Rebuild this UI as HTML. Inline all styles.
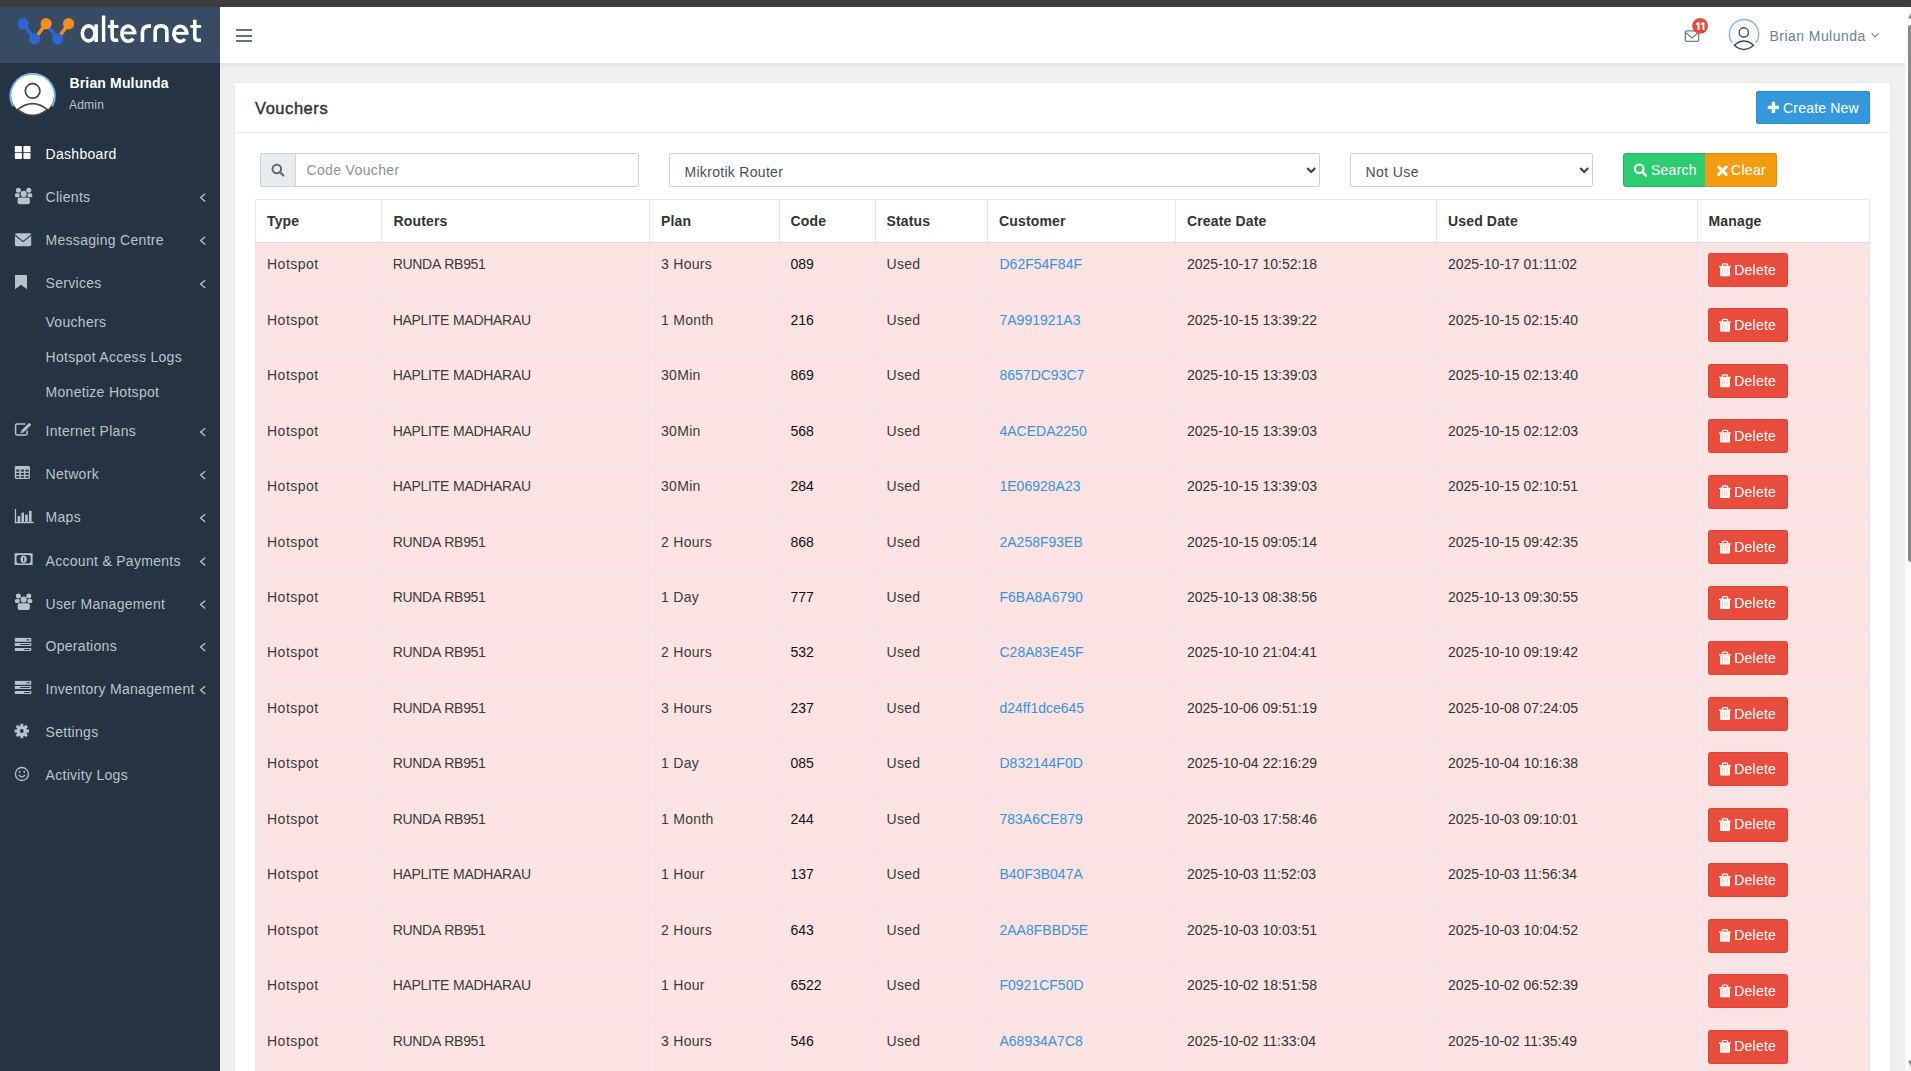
<!DOCTYPE html>
<html><head><meta charset="utf-8"><style>
*{box-sizing:border-box;margin:0;padding:0}
html,body{width:1911px;height:1071px;overflow:hidden;background:#f0f0f0;font-family:"Liberation Sans",sans-serif;font-size:14px;color:#333}
.abs{position:absolute}
.t{position:absolute;white-space:nowrap;line-height:1}
svg{position:absolute;overflow:visible}
</style></head><body>
<div class="abs" style="left:0px;top:0px;width:1911px;height:7px;background:#3d3d3d;"></div>
<div class="abs" style="left:0px;top:7px;width:220px;height:1064px;background:#253342;"></div>
<div class="abs" style="left:0px;top:7px;width:220px;height:56px;background:#374c63;"></div>
<div class="abs" style="left:220px;top:7px;width:1685px;height:56px;background:#fff;"></div>
<div class="abs" style="left:220px;top:63px;width:1685px;height:5px;background:linear-gradient(#e1e1e1,#f0f0f0);"></div>
<div class="abs" style="left:1905px;top:7px;width:6px;height:1064px;background:#fbfbfb;"></div>
<div class="abs" style="left:1908px;top:25px;width:3px;height:537px;background:#888;border-radius:3px 0 0 3px"></div>
<svg style="left:0;top:0" width="1911" height="1071"><path d="M1908,18.6 L1911,13 L1911,18.6 Z" fill="#888"/><path d="M1908,1060.8 L1911,1060.8 L1911,1066.8 Z" fill="#888"/></svg>
<div class="abs" style="left:235px;top:83px;width:1655px;height:1000px;background:#fff;box-shadow:0 0 1px rgba(0,0,0,.15)"></div>
<div class="abs" style="left:235px;top:132px;width:1655px;height:1px;background:#ececec;"></div>
<svg style="left:0;top:0" width="220" height="63">
<g stroke-width="3.5" stroke-linecap="round">
<line x1="23.1" y1="23.7" x2="34.6" y2="38.9" stroke="#2f66d3"/>
<line x1="34.6" y1="38.9" x2="46.1" y2="23.7" stroke="#f68d20"/>
<line x1="46.1" y1="23.7" x2="57.6" y2="38.9" stroke="#2f66d3"/>
<line x1="57.6" y1="38.9" x2="68.6" y2="23.7" stroke="#f68d20"/>
</g>
<circle cx="23.1" cy="23.7" r="5.6" fill="#2f66d3"/>
<circle cx="34.6" cy="38.9" r="5.6" fill="#2f66d3"/>
<circle cx="46.1" cy="23.7" r="5.6" fill="#f68d20"/>
<circle cx="57.6" cy="38.9" r="5.6" fill="#2f66d3"/>
<circle cx="68.6" cy="23.7" r="5.6" fill="#f68d20"/>
</svg>
<svg style="left:0;top:0" width="220" height="63"><g fill="none" stroke="#fff" stroke-width="3.6">
<ellipse cx="88.6" cy="33.35" rx="6.3" ry="7.5"/>
<path d="M112.15,19.9 V36.6 Q112.15,40.3 115.6,40.3 H118.2"/>
<path d="M134.6,33 A6.4,7.5 0 1 0 133.2,38.4"/>
<path d="M142.45,41.9 V32 C142.45,27.6 145.8,25.9 151,25.9"/>
<path d="M155.15,41.9 V31.3 Q155.15,25.9 161,25.9 Q166.85,25.9 166.85,31.3 V41.9"/>
<path d="M186.7,33.2 A6.45,7.6 0 1 0 185.0,39.0"/>
<path d="M194.75,19.8 V36.6 Q194.75,40.3 198.2,40.3 H201"/>
</g><g fill="#fff">
<rect x="94.4" y="24.3" width="3.5" height="17.7"/>
<rect x="101.9" y="15.5" width="3.4" height="26.4"/>
<rect x="107.8" y="24.9" width="10.7" height="3.1"/>
<rect x="121.8" y="31.6" width="14.6" height="2.8"/>
<rect x="174" y="31.9" width="14.5" height="2.9"/>
<rect x="190.3" y="25" width="10.9" height="2.9"/>
</g></svg>
<svg style="left:0;top:63px" width="70" height="70" viewBox="0 63 70 70">
<circle cx="32.6" cy="94.6" r="21.6" fill="#fff"/>
<path d="M9,106.5 L17.6,109.8 Q32.5,121 47.4,109.8 L56,106.5 L56,122 L9,122 Z" fill="#253342"/>
<path d="M17.6,109.6 Q32.5,97.5 47.4,109.6 Q32.5,121 17.6,109.6 Z" fill="#fff" stroke="#3f4852" stroke-width="1.7"/>
<circle cx="32.6" cy="90.9" r="7.3" fill="none" stroke="#3f4852" stroke-width="1.7"/>
<path d="M13.0,106.4 A22.2,22.2 0 1 1 52.2,106.4" fill="none" stroke="#6cb6f5" stroke-width="1.8"/>
</svg>
<div class="t" style="left:69.50px;top:75.95px;font-size:14px;color:#fff;font-weight:bold;letter-spacing:0.15px">Brian Mulunda</div>
<div class="t" style="left:69.00px;top:98.84px;font-size:12px;color:#b8c7ce;font-weight:normal;letter-spacing:0.2px">Admin</div>
<div class="t" style="left:45.50px;top:146.75px;font-size:14px;color:#fff;font-weight:normal;letter-spacing:0.3px">Dashboard</div>
<div class="t" style="left:45.50px;top:189.65px;font-size:14px;color:#b8c7ce;font-weight:normal;letter-spacing:0.3px">Clients</div>
<svg style="left:0;top:0" width="220" height="1071"><path d="M205.2,193.80 L200.6,197.60 L205.2,201.40" fill="none" stroke="#b8c7ce" stroke-width="1.3"/></svg>
<div class="t" style="left:45.50px;top:232.65px;font-size:14px;color:#b8c7ce;font-weight:normal;letter-spacing:0.3px">Messaging Centre</div>
<svg style="left:0;top:0" width="220" height="1071"><path d="M205.2,236.80 L200.6,240.60 L205.2,244.40" fill="none" stroke="#b8c7ce" stroke-width="1.3"/></svg>
<div class="t" style="left:45.50px;top:276.15px;font-size:14px;color:#b8c7ce;font-weight:normal;letter-spacing:0.3px">Services</div>
<svg style="left:0;top:0" width="220" height="1071"><path d="M205.2,280.30 L200.6,284.10 L205.2,287.90" fill="none" stroke="#b8c7ce" stroke-width="1.3"/></svg>
<div class="t" style="left:45.50px;top:315.15px;font-size:14px;color:#b8c7ce;font-weight:normal;letter-spacing:0.3px">Vouchers</div>
<div class="t" style="left:45.50px;top:350.15px;font-size:14px;color:#b8c7ce;font-weight:normal;letter-spacing:0.3px">Hotspot Access Logs</div>
<div class="t" style="left:45.50px;top:385.15px;font-size:14px;color:#b8c7ce;font-weight:normal;letter-spacing:0.3px">Monetize Hotspot</div>
<div class="t" style="left:45.50px;top:424.15px;font-size:14px;color:#b8c7ce;font-weight:normal;letter-spacing:0.3px">Internet Plans</div>
<svg style="left:0;top:0" width="220" height="1071"><path d="M205.2,428.30 L200.6,432.10 L205.2,435.90" fill="none" stroke="#b8c7ce" stroke-width="1.3"/></svg>
<div class="t" style="left:45.50px;top:467.15px;font-size:14px;color:#b8c7ce;font-weight:normal;letter-spacing:0.3px">Network</div>
<svg style="left:0;top:0" width="220" height="1071"><path d="M205.2,471.30 L200.6,475.10 L205.2,478.90" fill="none" stroke="#b8c7ce" stroke-width="1.3"/></svg>
<div class="t" style="left:45.50px;top:510.15px;font-size:14px;color:#b8c7ce;font-weight:normal;letter-spacing:0.3px">Maps</div>
<svg style="left:0;top:0" width="220" height="1071"><path d="M205.2,514.30 L200.6,518.10 L205.2,521.90" fill="none" stroke="#b8c7ce" stroke-width="1.3"/></svg>
<div class="t" style="left:45.50px;top:553.65px;font-size:14px;color:#b8c7ce;font-weight:normal;letter-spacing:0.3px">Account &amp; Payments</div>
<svg style="left:0;top:0" width="220" height="1071"><path d="M205.2,557.80 L200.6,561.60 L205.2,565.40" fill="none" stroke="#b8c7ce" stroke-width="1.3"/></svg>
<div class="t" style="left:45.50px;top:596.65px;font-size:14px;color:#b8c7ce;font-weight:normal;letter-spacing:0.3px">User Management</div>
<svg style="left:0;top:0" width="220" height="1071"><path d="M205.2,600.80 L200.6,604.60 L205.2,608.40" fill="none" stroke="#b8c7ce" stroke-width="1.3"/></svg>
<div class="t" style="left:45.50px;top:639.15px;font-size:14px;color:#b8c7ce;font-weight:normal;letter-spacing:0.3px">Operations</div>
<svg style="left:0;top:0" width="220" height="1071"><path d="M205.2,643.30 L200.6,647.10 L205.2,650.90" fill="none" stroke="#b8c7ce" stroke-width="1.3"/></svg>
<div class="t" style="left:45.50px;top:682.15px;font-size:14px;color:#b8c7ce;font-weight:normal;letter-spacing:0.3px">Inventory Management</div>
<svg style="left:0;top:0" width="220" height="1071"><path d="M205.2,686.30 L200.6,690.10 L205.2,693.90" fill="none" stroke="#b8c7ce" stroke-width="1.3"/></svg>
<div class="t" style="left:45.50px;top:725.15px;font-size:14px;color:#b8c7ce;font-weight:normal;letter-spacing:0.3px">Settings</div>
<div class="t" style="left:45.50px;top:768.15px;font-size:14px;color:#b8c7ce;font-weight:normal;letter-spacing:0.3px">Activity Logs</div>
<svg style="left:0;top:0" width="220" height="1071">
<g fill="#fff"><rect x="14.8" y="146" width="7.1" height="6.1" rx="0.6"/><rect x="23.4" y="146" width="7.1" height="6.1" rx="0.6"/>
<rect x="14.8" y="152.8" width="7.1" height="6.1" rx="0.6"/><rect x="23.4" y="152.8" width="7.1" height="6.1" rx="0.6"/></g>
<g fill="#b8c2cf" transform="translate(0,0)">
<circle cx="18.4" cy="190.3" r="2.5"/><circle cx="28.8" cy="190.3" r="2.5"/>
<circle cx="23.7" cy="193.9" r="3.1"/>
<rect x="14.9" y="193.2" width="4.8" height="4" rx="1.5"/>
<rect x="27.5" y="193.2" width="4.8" height="4" rx="1.5"/>
<rect x="17.6" y="197.5" width="12.3" height="6.7" rx="2"/>
</g>
<rect x="14.9" y="233.2" width="16.3" height="13" rx="1.6" fill="#b8c2cf"/>
<path d="M15.2,235.3 L23,241.6 L30.9,235.3" fill="none" stroke="#253342" stroke-width="1.1"/>
<path d="M15,275 H27 V289.2 L21,284.8 L15,289.2 Z" fill="#b8c2cf"/>
<path d="M25.5,424.1 H17 Q15.6,424.1 15.6,425.5 V433.6 Q15.6,435 17,435 H25.8 Q27.2,435 27.2,433.6 V430.5" fill="none" stroke="#b8c2cf" stroke-width="1.5"/>
<path d="M29.3,422.8 L31.2,424.7 L23.4,432.5 L20.6,433.3 L21.4,430.6 Z" fill="#b8c2cf"/>
<path d="M22.2,431 L22.8,431.6" stroke="#253342" stroke-width="0.8"/>
<rect x="14.8" y="466" width="15.1" height="13" rx="1.4" fill="#b8c2cf"/>
<g fill="#253342">
<rect x="16.2" y="469.6" width="3.2" height="2"/><rect x="20.9" y="469.6" width="3.2" height="2"/><rect x="25.5" y="469.6" width="3.2" height="2"/>
<rect x="16.2" y="472.9" width="3.2" height="2"/><rect x="20.9" y="472.9" width="3.2" height="2"/><rect x="25.5" y="472.9" width="3.2" height="2"/>
<rect x="16.2" y="476.1" width="3.2" height="1.7"/><rect x="20.9" y="476.1" width="3.2" height="1.7"/><rect x="25.5" y="476.1" width="3.2" height="1.7"/>
</g>
<g fill="#b8c2cf">
<rect x="14.8" y="509" width="1.3" height="14.2"/><rect x="14.8" y="521.9" width="18.9" height="1.3"/>
<rect x="17.6" y="516" width="2.6" height="5.9"/><rect x="21.4" y="512.6" width="2.6" height="9.3"/>
<rect x="25.2" y="514.6" width="2.6" height="7.3"/><rect x="29" y="510.8" width="2.6" height="11.1"/>
</g>
<rect x="14.6" y="553.2" width="18" height="11.8" fill="#b8c2cf"/>
<path d="M18,555 H29.2 L30.7,556.6 V562 L29.2,563.6 H18 L16.5,562 V556.6 Z" fill="#253342"/>
<ellipse cx="23.6" cy="559.3" rx="3.1" ry="3.8" fill="#b8c2cf"/>
<rect x="23.1" y="557.3" width="1.1" height="4.2" fill="#253342"/>
<g fill="#b8c2cf" transform="translate(0,405.7)">
<circle cx="18.4" cy="190.3" r="2.5"/><circle cx="28.8" cy="190.3" r="2.5"/>
<circle cx="23.7" cy="193.9" r="3.1"/>
<rect x="14.9" y="193.2" width="4.8" height="4" rx="1.5"/>
<rect x="27.5" y="193.2" width="4.8" height="4" rx="1.5"/>
<rect x="17.6" y="197.5" width="12.3" height="6.7" rx="2"/>
</g>
<g><rect x="14.8" y="637.90" width="16.45" height="3.9" fill="#b8c2cf"/><rect x="26.4" y="639.35" width="3.50" height="1" fill="#253342"/><rect x="14.8" y="643.00" width="16.45" height="3.0" fill="#b8c2cf"/><rect x="20.2" y="644.00" width="9.70" height="1" fill="#253342"/><rect x="14.8" y="648.00" width="16.45" height="3.0" fill="#b8c2cf"/><rect x="24.1" y="649.00" width="5.80" height="1" fill="#253342"/></g>
<g><rect x="14.8" y="680.90" width="16.45" height="3.9" fill="#b8c2cf"/><rect x="26.4" y="682.35" width="3.50" height="1" fill="#253342"/><rect x="14.8" y="686.00" width="16.45" height="3.0" fill="#b8c2cf"/><rect x="20.2" y="687.00" width="9.70" height="1" fill="#253342"/><rect x="14.8" y="691.00" width="16.45" height="3.0" fill="#b8c2cf"/><rect x="24.1" y="692.00" width="5.80" height="1" fill="#253342"/></g>
<g transform="translate(21.8,731)" fill="#b8c2cf">
<circle r="5.2"/>
<g><rect x="-1.5" y="-7.2" width="3" height="3" transform="rotate(0)"/><rect x="-1.5" y="-7.2" width="3" height="3" transform="rotate(45)"/><rect x="-1.5" y="-7.2" width="3" height="3" transform="rotate(90)"/><rect x="-1.5" y="-7.2" width="3" height="3" transform="rotate(135)"/><rect x="-1.5" y="-7.2" width="3" height="3" transform="rotate(180)"/><rect x="-1.5" y="-7.2" width="3" height="3" transform="rotate(225)"/><rect x="-1.5" y="-7.2" width="3" height="3" transform="rotate(270)"/><rect x="-1.5" y="-7.2" width="3" height="3" transform="rotate(315)"/></g>
<circle r="1.9" fill="#253342"/>
</g>
<circle cx="21.9" cy="774" r="6.5" fill="none" stroke="#b8c2cf" stroke-width="1.3"/>
<circle cx="19.6" cy="771.7" r="0.95" fill="#b8c2cf"/><circle cx="24.2" cy="771.7" r="0.95" fill="#b8c2cf"/>
<path d="M18.8,775 Q21.9,778.6 25,775" fill="none" stroke="#b8c2cf" stroke-width="1.2"/>
</svg>
<div class="abs" style="left:236px;top:29px;width:16.2px;height:2px;background:#637480;"></div>
<div class="abs" style="left:236px;top:34.8px;width:16.2px;height:2px;background:#637480;"></div>
<div class="abs" style="left:236px;top:40px;width:16.2px;height:2px;background:#637480;"></div>
<svg style="left:0;top:0" width="1911" height="70">
<rect x="1685.3" y="30.9" width="13.4" height="10.4" rx="1.3" fill="none" stroke="#6e7e8a" stroke-width="1.3"/>
<path d="M1685.6,32.6 L1692,38 L1698.5,32.6" fill="none" stroke="#6e7e8a" stroke-width="1.3"/>
<circle cx="1700.1" cy="25.9" r="7.9" fill="#e74c3c"/>
<path d="M1732.3,42.9 A14.65,14.65 0 1 1 1755.8,42.9" fill="none" stroke="#74b9f7" stroke-width="1.4"/>
<circle cx="1743.8" cy="32.4" r="4.6" fill="none" stroke="#3f4852" stroke-width="1.4"/>
<path d="M1734.3,45.2 Q1743.9,36.8 1753.5,45.2 Q1743.9,53.6 1734.3,45.2 Z" fill="none" stroke="#3f4852" stroke-width="1.4"/>
<path d="M1871.6,33.3 L1875,36.9 L1878.5,33.3" fill="none" stroke="#72808c" stroke-width="1.15"/>
</svg>
<svg style="left:0;top:0" width="1911" height="70"><path d="M1697.6,22.3 h1.9 v7.7 h-1.9 v-5.6 l-1.6,0.9 v-1.8 z M1702.5,22.3 h1.9 v7.7 h-1.9 v-5.6 l-1.6,0.9 v-1.8 z" fill="#fff"/></svg>
<div class="t" style="left:1769.50px;top:29.15px;font-size:14px;color:#72808c;font-weight:normal;letter-spacing:0.45px">Brian Mulunda</div>
<div class="t" style="left:255.00px;top:100.33px;font-size:16.5px;color:#333;font-weight:normal;letter-spacing:0.55px;-webkit-text-stroke:0.45px #333">Vouchers</div>
<div class="abs" style="left:1756px;top:91px;width:114px;height:33px;background:#3498db;border:1px solid #2a8ad0;border-radius:2px"></div>
<svg style="left:0;top:0" width="1911" height="200">
<path d="M1767.8,107.4 H1779 M1773.4,101.8 V113" stroke="#fff" stroke-width="3.4"/>
</svg>
<div class="t" style="left:1783.00px;top:101.25px;font-size:14px;color:#fff;font-weight:normal;letter-spacing:0.2px">Create New</div>
<div class="abs" style="left:260px;top:153px;width:36px;height:34px;background:#e9ecef;border:1px solid #cdd0d4;border-radius:2px 0 0 2px"></div>
<div class="abs" style="left:295px;top:153px;width:344px;height:34px;background:#fff;border:1px solid #d2d2d2;border-radius:0 2px 2px 0"></div>
<svg style="left:0;top:0" width="1911" height="200">
<circle cx="276.8" cy="169" r="4.3" fill="none" stroke="#5a6a78" stroke-width="2"/>
<path d="M279.8,172 L283.3,175.5" stroke="#5a6a78" stroke-width="2.2" stroke-linecap="round"/>
</svg>
<div class="t" style="left:306.50px;top:163.15px;font-size:14px;color:#8c939b;font-weight:normal;letter-spacing:0.35px">Code Voucher</div>
<div class="abs" style="left:669px;top:153px;width:651px;height:34px;background:#fff;border:1px solid #d2d2d2;border-radius:2px"></div>
<div class="t" style="left:684.50px;top:164.75px;font-size:14px;color:#495057;font-weight:normal;letter-spacing:0.3px">Mikrotik Router</div>
<div class="abs" style="left:1350px;top:153px;width:243px;height:34px;background:#fff;border:1px solid #d2d2d2;border-radius:2px"></div>
<div class="t" style="left:1365.50px;top:164.75px;font-size:14px;color:#495057;font-weight:normal;letter-spacing:0.4px">Not Use</div>
<svg style="left:0;top:0" width="1911" height="200">
<path d="M1307.2,168 L1311.2,172 L1315.2,168" fill="none" stroke="#3d434a" stroke-width="2.1"/>
<path d="M1580.2,168 L1584.2,172 L1588.2,168" fill="none" stroke="#3d434a" stroke-width="2.1"/>
</svg>
<div class="abs" style="left:1623px;top:153px;width:83px;height:34px;background:#2ecc71;border:1px solid #22b561;border-radius:3px 0 0 3px"></div>
<div class="abs" style="left:1705px;top:153px;width:72px;height:34px;background:#f39c12;border:1px solid #dd8b0b;border-left:0;border-radius:0 3px 3px 0"></div>
<svg style="left:0;top:0" width="1911" height="200">
<circle cx="1639.2" cy="168.8" r="4.3" fill="none" stroke="#fff" stroke-width="2.1"/>
<path d="M1642.3,171.9 L1646,175.6" stroke="#fff" stroke-width="2.4" stroke-linecap="round"/>
<path d="M1718.8,167 L1726.2,174.4 M1726.2,167 L1718.8,174.4" stroke="#fff" stroke-width="3" stroke-linecap="round"/>
</svg>
<div class="t" style="left:1651.00px;top:163.15px;font-size:14px;color:#fff;font-weight:normal;letter-spacing:0.25px">Search</div>
<div class="t" style="left:1731.00px;top:163.15px;font-size:14px;color:#fff;font-weight:normal;letter-spacing:0.3px">Clear</div>
<div class="abs" style="left:255px;top:243px;width:1615px;height:900px;background:#fbe3e3;"></div>
<div class="abs" style="left:255px;top:199px;width:1615px;height:1px;background:#e6e9ec;"></div>
<div class="abs" style="left:255px;top:242px;width:1615px;height:1px;background:#dcdcdc;"></div>
<div class="abs" style="left:256px;top:297.40px;width:1613px;height:1px;background:#e7e5e7"></div>
<div class="abs" style="left:256px;top:352.87px;width:1613px;height:1px;background:#e7e5e7"></div>
<div class="abs" style="left:256px;top:408.34px;width:1613px;height:1px;background:#e7e5e7"></div>
<div class="abs" style="left:256px;top:463.81px;width:1613px;height:1px;background:#e7e5e7"></div>
<div class="abs" style="left:256px;top:519.28px;width:1613px;height:1px;background:#e7e5e7"></div>
<div class="abs" style="left:256px;top:574.75px;width:1613px;height:1px;background:#e7e5e7"></div>
<div class="abs" style="left:256px;top:630.22px;width:1613px;height:1px;background:#e7e5e7"></div>
<div class="abs" style="left:256px;top:685.69px;width:1613px;height:1px;background:#e7e5e7"></div>
<div class="abs" style="left:256px;top:741.16px;width:1613px;height:1px;background:#e7e5e7"></div>
<div class="abs" style="left:256px;top:796.63px;width:1613px;height:1px;background:#e7e5e7"></div>
<div class="abs" style="left:256px;top:852.10px;width:1613px;height:1px;background:#e7e5e7"></div>
<div class="abs" style="left:256px;top:907.57px;width:1613px;height:1px;background:#e7e5e7"></div>
<div class="abs" style="left:256px;top:963.04px;width:1613px;height:1px;background:#e7e5e7"></div>
<div class="abs" style="left:256px;top:1018.51px;width:1613px;height:1px;background:#e7e5e7"></div>
<div class="abs" style="left:256px;top:1073.98px;width:1613px;height:1px;background:#e7e5e7"></div>
<div class="abs" style="left:255px;top:199px;width:1px;height:43px;background:#e6e9ec;"></div>
<div class="abs" style="left:255px;top:243px;width:1px;height:900px;background:#e9e4e8;"></div>
<div class="abs" style="left:381px;top:199px;width:1px;height:43px;background:#e6e9ec;"></div>
<div class="abs" style="left:381px;top:243px;width:1px;height:900px;background:#e9e4e8;"></div>
<div class="abs" style="left:649px;top:199px;width:1px;height:43px;background:#e6e9ec;"></div>
<div class="abs" style="left:649px;top:243px;width:1px;height:900px;background:#e9e4e8;"></div>
<div class="abs" style="left:779px;top:199px;width:1px;height:43px;background:#e6e9ec;"></div>
<div class="abs" style="left:779px;top:243px;width:1px;height:900px;background:#e9e4e8;"></div>
<div class="abs" style="left:875px;top:199px;width:1px;height:43px;background:#e6e9ec;"></div>
<div class="abs" style="left:875px;top:243px;width:1px;height:900px;background:#e9e4e8;"></div>
<div class="abs" style="left:987px;top:199px;width:1px;height:43px;background:#e6e9ec;"></div>
<div class="abs" style="left:987px;top:243px;width:1px;height:900px;background:#e9e4e8;"></div>
<div class="abs" style="left:1175px;top:199px;width:1px;height:43px;background:#e6e9ec;"></div>
<div class="abs" style="left:1175px;top:243px;width:1px;height:900px;background:#e9e4e8;"></div>
<div class="abs" style="left:1436px;top:199px;width:1px;height:43px;background:#e6e9ec;"></div>
<div class="abs" style="left:1436px;top:243px;width:1px;height:900px;background:#e9e4e8;"></div>
<div class="abs" style="left:1697px;top:199px;width:1px;height:43px;background:#e6e9ec;"></div>
<div class="abs" style="left:1697px;top:243px;width:1px;height:900px;background:#e9e4e8;"></div>
<div class="abs" style="left:1869px;top:199px;width:1px;height:43px;background:#e6e9ec;"></div>
<div class="abs" style="left:1869px;top:243px;width:1px;height:900px;background:#e9e4e8;"></div>
<div class="t" style="left:267.00px;top:214.15px;font-size:14px;color:#333;font-weight:bold;letter-spacing:0.15px">Type</div>
<div class="t" style="left:393.50px;top:214.15px;font-size:14px;color:#333;font-weight:bold;letter-spacing:0.15px">Routers</div>
<div class="t" style="left:661.00px;top:214.15px;font-size:14px;color:#333;font-weight:bold;letter-spacing:0.15px">Plan</div>
<div class="t" style="left:790.50px;top:214.15px;font-size:14px;color:#333;font-weight:bold;letter-spacing:0.15px">Code</div>
<div class="t" style="left:886.50px;top:214.15px;font-size:14px;color:#333;font-weight:bold;letter-spacing:0.15px">Status</div>
<div class="t" style="left:999.00px;top:214.15px;font-size:14px;color:#333;font-weight:bold;letter-spacing:0.15px">Customer</div>
<div class="t" style="left:1187.00px;top:214.15px;font-size:14px;color:#333;font-weight:bold;letter-spacing:0.15px">Create Date</div>
<div class="t" style="left:1448.00px;top:214.15px;font-size:14px;color:#333;font-weight:bold;letter-spacing:0.15px">Used Date</div>
<div class="t" style="left:1708.50px;top:214.15px;font-size:14px;color:#333;font-weight:bold;letter-spacing:0.15px">Manage</div>
<div class="t" style="left:267.00px;top:257.15px;font-size:14px;color:#3a3a3a;font-weight:normal;letter-spacing:0.5px">Hotspot</div>
<div class="t" style="left:392.70px;top:257.15px;font-size:14px;color:#3a3a3a;font-weight:normal;letter-spacing:-0.3px;word-spacing:0.5px">RUNDA RB951</div>
<div class="t" style="left:661.00px;top:257.15px;font-size:14px;color:#3a3a3a;font-weight:normal;letter-spacing:0.3px">3 Hours</div>
<div class="t" style="left:790.50px;top:257.15px;font-size:14px;color:#111;font-weight:normal;">089</div>
<div class="t" style="left:886.50px;top:257.15px;font-size:14px;color:#3a3a3a;font-weight:normal;letter-spacing:0.3px">Used</div>
<div class="t" style="left:999.50px;top:257.15px;font-size:14px;color:#3592dc;font-weight:normal;">D62F54F84F</div>
<div class="t" style="left:1187.00px;top:257.15px;font-size:14px;color:#333;font-weight:normal;">2025-10-17 10:52:18</div>
<div class="t" style="left:1448.00px;top:257.15px;font-size:14px;color:#333;font-weight:normal;">2025-10-17 01:11:02</div>
<div class="abs" style="left:1708px;top:253.00px;width:80px;height:34px;background:#e74c3c;border:1px solid #dc4334;border-radius:2.5px"></div>
<div class="t" style="left:1734.30px;top:262.75px;font-size:14px;color:#fff;font-weight:normal;letter-spacing:0.2px">Delete</div>
<div class="t" style="left:267.00px;top:312.62px;font-size:14px;color:#3a3a3a;font-weight:normal;letter-spacing:0.5px">Hotspot</div>
<div class="t" style="left:392.70px;top:312.62px;font-size:14px;color:#3a3a3a;font-weight:normal;letter-spacing:-0.3px;word-spacing:0.5px">HAPLITE MADHARAU</div>
<div class="t" style="left:661.00px;top:312.62px;font-size:14px;color:#3a3a3a;font-weight:normal;letter-spacing:0.3px">1 Month</div>
<div class="t" style="left:790.50px;top:312.62px;font-size:14px;color:#111;font-weight:normal;">216</div>
<div class="t" style="left:886.50px;top:312.62px;font-size:14px;color:#3a3a3a;font-weight:normal;letter-spacing:0.3px">Used</div>
<div class="t" style="left:999.50px;top:312.62px;font-size:14px;color:#3592dc;font-weight:normal;">7A991921A3</div>
<div class="t" style="left:1187.00px;top:312.62px;font-size:14px;color:#333;font-weight:normal;">2025-10-15 13:39:22</div>
<div class="t" style="left:1448.00px;top:312.62px;font-size:14px;color:#333;font-weight:normal;">2025-10-15 02:15:40</div>
<div class="abs" style="left:1708px;top:308.47px;width:80px;height:34px;background:#e74c3c;border:1px solid #dc4334;border-radius:2.5px"></div>
<div class="t" style="left:1734.30px;top:318.22px;font-size:14px;color:#fff;font-weight:normal;letter-spacing:0.2px">Delete</div>
<div class="t" style="left:267.00px;top:368.09px;font-size:14px;color:#3a3a3a;font-weight:normal;letter-spacing:0.5px">Hotspot</div>
<div class="t" style="left:392.70px;top:368.09px;font-size:14px;color:#3a3a3a;font-weight:normal;letter-spacing:-0.3px;word-spacing:0.5px">HAPLITE MADHARAU</div>
<div class="t" style="left:661.00px;top:368.09px;font-size:14px;color:#3a3a3a;font-weight:normal;letter-spacing:0.3px">30Min</div>
<div class="t" style="left:790.50px;top:368.09px;font-size:14px;color:#111;font-weight:normal;">869</div>
<div class="t" style="left:886.50px;top:368.09px;font-size:14px;color:#3a3a3a;font-weight:normal;letter-spacing:0.3px">Used</div>
<div class="t" style="left:999.50px;top:368.09px;font-size:14px;color:#3592dc;font-weight:normal;">8657DC93C7</div>
<div class="t" style="left:1187.00px;top:368.09px;font-size:14px;color:#333;font-weight:normal;">2025-10-15 13:39:03</div>
<div class="t" style="left:1448.00px;top:368.09px;font-size:14px;color:#333;font-weight:normal;">2025-10-15 02:13:40</div>
<div class="abs" style="left:1708px;top:363.94px;width:80px;height:34px;background:#e74c3c;border:1px solid #dc4334;border-radius:2.5px"></div>
<div class="t" style="left:1734.30px;top:373.69px;font-size:14px;color:#fff;font-weight:normal;letter-spacing:0.2px">Delete</div>
<div class="t" style="left:267.00px;top:423.56px;font-size:14px;color:#3a3a3a;font-weight:normal;letter-spacing:0.5px">Hotspot</div>
<div class="t" style="left:392.70px;top:423.56px;font-size:14px;color:#3a3a3a;font-weight:normal;letter-spacing:-0.3px;word-spacing:0.5px">HAPLITE MADHARAU</div>
<div class="t" style="left:661.00px;top:423.56px;font-size:14px;color:#3a3a3a;font-weight:normal;letter-spacing:0.3px">30Min</div>
<div class="t" style="left:790.50px;top:423.56px;font-size:14px;color:#111;font-weight:normal;">568</div>
<div class="t" style="left:886.50px;top:423.56px;font-size:14px;color:#3a3a3a;font-weight:normal;letter-spacing:0.3px">Used</div>
<div class="t" style="left:999.50px;top:423.56px;font-size:14px;color:#3592dc;font-weight:normal;">4ACEDA2250</div>
<div class="t" style="left:1187.00px;top:423.56px;font-size:14px;color:#333;font-weight:normal;">2025-10-15 13:39:03</div>
<div class="t" style="left:1448.00px;top:423.56px;font-size:14px;color:#333;font-weight:normal;">2025-10-15 02:12:03</div>
<div class="abs" style="left:1708px;top:419.41px;width:80px;height:34px;background:#e74c3c;border:1px solid #dc4334;border-radius:2.5px"></div>
<div class="t" style="left:1734.30px;top:429.16px;font-size:14px;color:#fff;font-weight:normal;letter-spacing:0.2px">Delete</div>
<div class="t" style="left:267.00px;top:479.03px;font-size:14px;color:#3a3a3a;font-weight:normal;letter-spacing:0.5px">Hotspot</div>
<div class="t" style="left:392.70px;top:479.03px;font-size:14px;color:#3a3a3a;font-weight:normal;letter-spacing:-0.3px;word-spacing:0.5px">HAPLITE MADHARAU</div>
<div class="t" style="left:661.00px;top:479.03px;font-size:14px;color:#3a3a3a;font-weight:normal;letter-spacing:0.3px">30Min</div>
<div class="t" style="left:790.50px;top:479.03px;font-size:14px;color:#111;font-weight:normal;">284</div>
<div class="t" style="left:886.50px;top:479.03px;font-size:14px;color:#3a3a3a;font-weight:normal;letter-spacing:0.3px">Used</div>
<div class="t" style="left:999.50px;top:479.03px;font-size:14px;color:#3592dc;font-weight:normal;">1E06928A23</div>
<div class="t" style="left:1187.00px;top:479.03px;font-size:14px;color:#333;font-weight:normal;">2025-10-15 13:39:03</div>
<div class="t" style="left:1448.00px;top:479.03px;font-size:14px;color:#333;font-weight:normal;">2025-10-15 02:10:51</div>
<div class="abs" style="left:1708px;top:474.88px;width:80px;height:34px;background:#e74c3c;border:1px solid #dc4334;border-radius:2.5px"></div>
<div class="t" style="left:1734.30px;top:484.63px;font-size:14px;color:#fff;font-weight:normal;letter-spacing:0.2px">Delete</div>
<div class="t" style="left:267.00px;top:534.50px;font-size:14px;color:#3a3a3a;font-weight:normal;letter-spacing:0.5px">Hotspot</div>
<div class="t" style="left:392.70px;top:534.50px;font-size:14px;color:#3a3a3a;font-weight:normal;letter-spacing:-0.3px;word-spacing:0.5px">RUNDA RB951</div>
<div class="t" style="left:661.00px;top:534.50px;font-size:14px;color:#3a3a3a;font-weight:normal;letter-spacing:0.3px">2 Hours</div>
<div class="t" style="left:790.50px;top:534.50px;font-size:14px;color:#111;font-weight:normal;">868</div>
<div class="t" style="left:886.50px;top:534.50px;font-size:14px;color:#3a3a3a;font-weight:normal;letter-spacing:0.3px">Used</div>
<div class="t" style="left:999.50px;top:534.50px;font-size:14px;color:#3592dc;font-weight:normal;">2A258F93EB</div>
<div class="t" style="left:1187.00px;top:534.50px;font-size:14px;color:#333;font-weight:normal;">2025-10-15 09:05:14</div>
<div class="t" style="left:1448.00px;top:534.50px;font-size:14px;color:#333;font-weight:normal;">2025-10-15 09:42:35</div>
<div class="abs" style="left:1708px;top:530.35px;width:80px;height:34px;background:#e74c3c;border:1px solid #dc4334;border-radius:2.5px"></div>
<div class="t" style="left:1734.30px;top:540.10px;font-size:14px;color:#fff;font-weight:normal;letter-spacing:0.2px">Delete</div>
<div class="t" style="left:267.00px;top:589.97px;font-size:14px;color:#3a3a3a;font-weight:normal;letter-spacing:0.5px">Hotspot</div>
<div class="t" style="left:392.70px;top:589.97px;font-size:14px;color:#3a3a3a;font-weight:normal;letter-spacing:-0.3px;word-spacing:0.5px">RUNDA RB951</div>
<div class="t" style="left:661.00px;top:589.97px;font-size:14px;color:#3a3a3a;font-weight:normal;letter-spacing:0.3px">1 Day</div>
<div class="t" style="left:790.50px;top:589.97px;font-size:14px;color:#111;font-weight:normal;">777</div>
<div class="t" style="left:886.50px;top:589.97px;font-size:14px;color:#3a3a3a;font-weight:normal;letter-spacing:0.3px">Used</div>
<div class="t" style="left:999.50px;top:589.97px;font-size:14px;color:#3592dc;font-weight:normal;">F6BA8A6790</div>
<div class="t" style="left:1187.00px;top:589.97px;font-size:14px;color:#333;font-weight:normal;">2025-10-13 08:38:56</div>
<div class="t" style="left:1448.00px;top:589.97px;font-size:14px;color:#333;font-weight:normal;">2025-10-13 09:30:55</div>
<div class="abs" style="left:1708px;top:585.82px;width:80px;height:34px;background:#e74c3c;border:1px solid #dc4334;border-radius:2.5px"></div>
<div class="t" style="left:1734.30px;top:595.57px;font-size:14px;color:#fff;font-weight:normal;letter-spacing:0.2px">Delete</div>
<div class="t" style="left:267.00px;top:645.44px;font-size:14px;color:#3a3a3a;font-weight:normal;letter-spacing:0.5px">Hotspot</div>
<div class="t" style="left:392.70px;top:645.44px;font-size:14px;color:#3a3a3a;font-weight:normal;letter-spacing:-0.3px;word-spacing:0.5px">RUNDA RB951</div>
<div class="t" style="left:661.00px;top:645.44px;font-size:14px;color:#3a3a3a;font-weight:normal;letter-spacing:0.3px">2 Hours</div>
<div class="t" style="left:790.50px;top:645.44px;font-size:14px;color:#111;font-weight:normal;">532</div>
<div class="t" style="left:886.50px;top:645.44px;font-size:14px;color:#3a3a3a;font-weight:normal;letter-spacing:0.3px">Used</div>
<div class="t" style="left:999.50px;top:645.44px;font-size:14px;color:#3592dc;font-weight:normal;">C28A83E45F</div>
<div class="t" style="left:1187.00px;top:645.44px;font-size:14px;color:#333;font-weight:normal;">2025-10-10 21:04:41</div>
<div class="t" style="left:1448.00px;top:645.44px;font-size:14px;color:#333;font-weight:normal;">2025-10-10 09:19:42</div>
<div class="abs" style="left:1708px;top:641.29px;width:80px;height:34px;background:#e74c3c;border:1px solid #dc4334;border-radius:2.5px"></div>
<div class="t" style="left:1734.30px;top:651.04px;font-size:14px;color:#fff;font-weight:normal;letter-spacing:0.2px">Delete</div>
<div class="t" style="left:267.00px;top:700.91px;font-size:14px;color:#3a3a3a;font-weight:normal;letter-spacing:0.5px">Hotspot</div>
<div class="t" style="left:392.70px;top:700.91px;font-size:14px;color:#3a3a3a;font-weight:normal;letter-spacing:-0.3px;word-spacing:0.5px">RUNDA RB951</div>
<div class="t" style="left:661.00px;top:700.91px;font-size:14px;color:#3a3a3a;font-weight:normal;letter-spacing:0.3px">3 Hours</div>
<div class="t" style="left:790.50px;top:700.91px;font-size:14px;color:#111;font-weight:normal;">237</div>
<div class="t" style="left:886.50px;top:700.91px;font-size:14px;color:#3a3a3a;font-weight:normal;letter-spacing:0.3px">Used</div>
<div class="t" style="left:999.50px;top:700.91px;font-size:14px;color:#3592dc;font-weight:normal;">d24ff1dce645</div>
<div class="t" style="left:1187.00px;top:700.91px;font-size:14px;color:#333;font-weight:normal;">2025-10-06 09:51:19</div>
<div class="t" style="left:1448.00px;top:700.91px;font-size:14px;color:#333;font-weight:normal;">2025-10-08 07:24:05</div>
<div class="abs" style="left:1708px;top:696.76px;width:80px;height:34px;background:#e74c3c;border:1px solid #dc4334;border-radius:2.5px"></div>
<div class="t" style="left:1734.30px;top:706.51px;font-size:14px;color:#fff;font-weight:normal;letter-spacing:0.2px">Delete</div>
<div class="t" style="left:267.00px;top:756.38px;font-size:14px;color:#3a3a3a;font-weight:normal;letter-spacing:0.5px">Hotspot</div>
<div class="t" style="left:392.70px;top:756.38px;font-size:14px;color:#3a3a3a;font-weight:normal;letter-spacing:-0.3px;word-spacing:0.5px">RUNDA RB951</div>
<div class="t" style="left:661.00px;top:756.38px;font-size:14px;color:#3a3a3a;font-weight:normal;letter-spacing:0.3px">1 Day</div>
<div class="t" style="left:790.50px;top:756.38px;font-size:14px;color:#111;font-weight:normal;">085</div>
<div class="t" style="left:886.50px;top:756.38px;font-size:14px;color:#3a3a3a;font-weight:normal;letter-spacing:0.3px">Used</div>
<div class="t" style="left:999.50px;top:756.38px;font-size:14px;color:#3592dc;font-weight:normal;">D832144F0D</div>
<div class="t" style="left:1187.00px;top:756.38px;font-size:14px;color:#333;font-weight:normal;">2025-10-04 22:16:29</div>
<div class="t" style="left:1448.00px;top:756.38px;font-size:14px;color:#333;font-weight:normal;">2025-10-04 10:16:38</div>
<div class="abs" style="left:1708px;top:752.23px;width:80px;height:34px;background:#e74c3c;border:1px solid #dc4334;border-radius:2.5px"></div>
<div class="t" style="left:1734.30px;top:761.98px;font-size:14px;color:#fff;font-weight:normal;letter-spacing:0.2px">Delete</div>
<div class="t" style="left:267.00px;top:811.85px;font-size:14px;color:#3a3a3a;font-weight:normal;letter-spacing:0.5px">Hotspot</div>
<div class="t" style="left:392.70px;top:811.85px;font-size:14px;color:#3a3a3a;font-weight:normal;letter-spacing:-0.3px;word-spacing:0.5px">RUNDA RB951</div>
<div class="t" style="left:661.00px;top:811.85px;font-size:14px;color:#3a3a3a;font-weight:normal;letter-spacing:0.3px">1 Month</div>
<div class="t" style="left:790.50px;top:811.85px;font-size:14px;color:#111;font-weight:normal;">244</div>
<div class="t" style="left:886.50px;top:811.85px;font-size:14px;color:#3a3a3a;font-weight:normal;letter-spacing:0.3px">Used</div>
<div class="t" style="left:999.50px;top:811.85px;font-size:14px;color:#3592dc;font-weight:normal;">783A6CE879</div>
<div class="t" style="left:1187.00px;top:811.85px;font-size:14px;color:#333;font-weight:normal;">2025-10-03 17:58:46</div>
<div class="t" style="left:1448.00px;top:811.85px;font-size:14px;color:#333;font-weight:normal;">2025-10-03 09:10:01</div>
<div class="abs" style="left:1708px;top:807.70px;width:80px;height:34px;background:#e74c3c;border:1px solid #dc4334;border-radius:2.5px"></div>
<div class="t" style="left:1734.30px;top:817.45px;font-size:14px;color:#fff;font-weight:normal;letter-spacing:0.2px">Delete</div>
<div class="t" style="left:267.00px;top:867.32px;font-size:14px;color:#3a3a3a;font-weight:normal;letter-spacing:0.5px">Hotspot</div>
<div class="t" style="left:392.70px;top:867.32px;font-size:14px;color:#3a3a3a;font-weight:normal;letter-spacing:-0.3px;word-spacing:0.5px">HAPLITE MADHARAU</div>
<div class="t" style="left:661.00px;top:867.32px;font-size:14px;color:#3a3a3a;font-weight:normal;letter-spacing:0.3px">1 Hour</div>
<div class="t" style="left:790.50px;top:867.32px;font-size:14px;color:#111;font-weight:normal;">137</div>
<div class="t" style="left:886.50px;top:867.32px;font-size:14px;color:#3a3a3a;font-weight:normal;letter-spacing:0.3px">Used</div>
<div class="t" style="left:999.50px;top:867.32px;font-size:14px;color:#3592dc;font-weight:normal;">B40F3B047A</div>
<div class="t" style="left:1187.00px;top:867.32px;font-size:14px;color:#333;font-weight:normal;">2025-10-03 11:52:03</div>
<div class="t" style="left:1448.00px;top:867.32px;font-size:14px;color:#333;font-weight:normal;">2025-10-03 11:56:34</div>
<div class="abs" style="left:1708px;top:863.17px;width:80px;height:34px;background:#e74c3c;border:1px solid #dc4334;border-radius:2.5px"></div>
<div class="t" style="left:1734.30px;top:872.92px;font-size:14px;color:#fff;font-weight:normal;letter-spacing:0.2px">Delete</div>
<div class="t" style="left:267.00px;top:922.79px;font-size:14px;color:#3a3a3a;font-weight:normal;letter-spacing:0.5px">Hotspot</div>
<div class="t" style="left:392.70px;top:922.79px;font-size:14px;color:#3a3a3a;font-weight:normal;letter-spacing:-0.3px;word-spacing:0.5px">RUNDA RB951</div>
<div class="t" style="left:661.00px;top:922.79px;font-size:14px;color:#3a3a3a;font-weight:normal;letter-spacing:0.3px">2 Hours</div>
<div class="t" style="left:790.50px;top:922.79px;font-size:14px;color:#111;font-weight:normal;">643</div>
<div class="t" style="left:886.50px;top:922.79px;font-size:14px;color:#3a3a3a;font-weight:normal;letter-spacing:0.3px">Used</div>
<div class="t" style="left:999.50px;top:922.79px;font-size:14px;color:#3592dc;font-weight:normal;">2AA8FBBD5E</div>
<div class="t" style="left:1187.00px;top:922.79px;font-size:14px;color:#333;font-weight:normal;">2025-10-03 10:03:51</div>
<div class="t" style="left:1448.00px;top:922.79px;font-size:14px;color:#333;font-weight:normal;">2025-10-03 10:04:52</div>
<div class="abs" style="left:1708px;top:918.64px;width:80px;height:34px;background:#e74c3c;border:1px solid #dc4334;border-radius:2.5px"></div>
<div class="t" style="left:1734.30px;top:928.39px;font-size:14px;color:#fff;font-weight:normal;letter-spacing:0.2px">Delete</div>
<div class="t" style="left:267.00px;top:978.26px;font-size:14px;color:#3a3a3a;font-weight:normal;letter-spacing:0.5px">Hotspot</div>
<div class="t" style="left:392.70px;top:978.26px;font-size:14px;color:#3a3a3a;font-weight:normal;letter-spacing:-0.3px;word-spacing:0.5px">HAPLITE MADHARAU</div>
<div class="t" style="left:661.00px;top:978.26px;font-size:14px;color:#3a3a3a;font-weight:normal;letter-spacing:0.3px">1 Hour</div>
<div class="t" style="left:790.50px;top:978.26px;font-size:14px;color:#111;font-weight:normal;">6522</div>
<div class="t" style="left:886.50px;top:978.26px;font-size:14px;color:#3a3a3a;font-weight:normal;letter-spacing:0.3px">Used</div>
<div class="t" style="left:999.50px;top:978.26px;font-size:14px;color:#3592dc;font-weight:normal;">F0921CF50D</div>
<div class="t" style="left:1187.00px;top:978.26px;font-size:14px;color:#333;font-weight:normal;">2025-10-02 18:51:58</div>
<div class="t" style="left:1448.00px;top:978.26px;font-size:14px;color:#333;font-weight:normal;">2025-10-02 06:52:39</div>
<div class="abs" style="left:1708px;top:974.11px;width:80px;height:34px;background:#e74c3c;border:1px solid #dc4334;border-radius:2.5px"></div>
<div class="t" style="left:1734.30px;top:983.86px;font-size:14px;color:#fff;font-weight:normal;letter-spacing:0.2px">Delete</div>
<div class="t" style="left:267.00px;top:1033.73px;font-size:14px;color:#3a3a3a;font-weight:normal;letter-spacing:0.5px">Hotspot</div>
<div class="t" style="left:392.70px;top:1033.73px;font-size:14px;color:#3a3a3a;font-weight:normal;letter-spacing:-0.3px;word-spacing:0.5px">RUNDA RB951</div>
<div class="t" style="left:661.00px;top:1033.73px;font-size:14px;color:#3a3a3a;font-weight:normal;letter-spacing:0.3px">3 Hours</div>
<div class="t" style="left:790.50px;top:1033.73px;font-size:14px;color:#111;font-weight:normal;">546</div>
<div class="t" style="left:886.50px;top:1033.73px;font-size:14px;color:#3a3a3a;font-weight:normal;letter-spacing:0.3px">Used</div>
<div class="t" style="left:999.50px;top:1033.73px;font-size:14px;color:#3592dc;font-weight:normal;">A68934A7C8</div>
<div class="t" style="left:1187.00px;top:1033.73px;font-size:14px;color:#333;font-weight:normal;">2025-10-02 11:33:04</div>
<div class="t" style="left:1448.00px;top:1033.73px;font-size:14px;color:#333;font-weight:normal;">2025-10-02 11:35:49</div>
<div class="abs" style="left:1708px;top:1029.58px;width:80px;height:34px;background:#e74c3c;border:1px solid #dc4334;border-radius:2.5px"></div>
<div class="t" style="left:1734.30px;top:1039.33px;font-size:14px;color:#fff;font-weight:normal;letter-spacing:0.2px">Delete</div>
<svg style="left:0;top:0" width="1911" height="1071"><path d="M1722.4,266.20 v-1.3 q0,-1 1,-1 h3.3 q1,0 1,1 v1.3" fill="none" stroke="#fff" stroke-width="1.2"/><rect x="1718.9" y="265.90" width="12" height="1.3" fill="#fff"/><path d="M1720.1,267.10 h9.9 v8.2 q0,0.9 -0.9,0.9 h-8.1 q-0.9,0 -0.9,-0.9 z" fill="#fff"/><g fill="#f6c6b6"><rect x="1722.2" y="268.20" width="0.9" height="5.8"/><rect x="1724.4" y="268.20" width="0.9" height="5.8"/><rect x="1726.6" y="268.20" width="0.9" height="5.8"/></g><path d="M1722.4,321.67 v-1.3 q0,-1 1,-1 h3.3 q1,0 1,1 v1.3" fill="none" stroke="#fff" stroke-width="1.2"/><rect x="1718.9" y="321.37" width="12" height="1.3" fill="#fff"/><path d="M1720.1,322.57 h9.9 v8.2 q0,0.9 -0.9,0.9 h-8.1 q-0.9,0 -0.9,-0.9 z" fill="#fff"/><g fill="#f6c6b6"><rect x="1722.2" y="323.67" width="0.9" height="5.8"/><rect x="1724.4" y="323.67" width="0.9" height="5.8"/><rect x="1726.6" y="323.67" width="0.9" height="5.8"/></g><path d="M1722.4,377.14 v-1.3 q0,-1 1,-1 h3.3 q1,0 1,1 v1.3" fill="none" stroke="#fff" stroke-width="1.2"/><rect x="1718.9" y="376.84" width="12" height="1.3" fill="#fff"/><path d="M1720.1,378.04 h9.9 v8.2 q0,0.9 -0.9,0.9 h-8.1 q-0.9,0 -0.9,-0.9 z" fill="#fff"/><g fill="#f6c6b6"><rect x="1722.2" y="379.14" width="0.9" height="5.8"/><rect x="1724.4" y="379.14" width="0.9" height="5.8"/><rect x="1726.6" y="379.14" width="0.9" height="5.8"/></g><path d="M1722.4,432.61 v-1.3 q0,-1 1,-1 h3.3 q1,0 1,1 v1.3" fill="none" stroke="#fff" stroke-width="1.2"/><rect x="1718.9" y="432.31" width="12" height="1.3" fill="#fff"/><path d="M1720.1,433.51 h9.9 v8.2 q0,0.9 -0.9,0.9 h-8.1 q-0.9,0 -0.9,-0.9 z" fill="#fff"/><g fill="#f6c6b6"><rect x="1722.2" y="434.61" width="0.9" height="5.8"/><rect x="1724.4" y="434.61" width="0.9" height="5.8"/><rect x="1726.6" y="434.61" width="0.9" height="5.8"/></g><path d="M1722.4,488.08 v-1.3 q0,-1 1,-1 h3.3 q1,0 1,1 v1.3" fill="none" stroke="#fff" stroke-width="1.2"/><rect x="1718.9" y="487.78" width="12" height="1.3" fill="#fff"/><path d="M1720.1,488.98 h9.9 v8.2 q0,0.9 -0.9,0.9 h-8.1 q-0.9,0 -0.9,-0.9 z" fill="#fff"/><g fill="#f6c6b6"><rect x="1722.2" y="490.08" width="0.9" height="5.8"/><rect x="1724.4" y="490.08" width="0.9" height="5.8"/><rect x="1726.6" y="490.08" width="0.9" height="5.8"/></g><path d="M1722.4,543.55 v-1.3 q0,-1 1,-1 h3.3 q1,0 1,1 v1.3" fill="none" stroke="#fff" stroke-width="1.2"/><rect x="1718.9" y="543.25" width="12" height="1.3" fill="#fff"/><path d="M1720.1,544.45 h9.9 v8.2 q0,0.9 -0.9,0.9 h-8.1 q-0.9,0 -0.9,-0.9 z" fill="#fff"/><g fill="#f6c6b6"><rect x="1722.2" y="545.55" width="0.9" height="5.8"/><rect x="1724.4" y="545.55" width="0.9" height="5.8"/><rect x="1726.6" y="545.55" width="0.9" height="5.8"/></g><path d="M1722.4,599.02 v-1.3 q0,-1 1,-1 h3.3 q1,0 1,1 v1.3" fill="none" stroke="#fff" stroke-width="1.2"/><rect x="1718.9" y="598.72" width="12" height="1.3" fill="#fff"/><path d="M1720.1,599.92 h9.9 v8.2 q0,0.9 -0.9,0.9 h-8.1 q-0.9,0 -0.9,-0.9 z" fill="#fff"/><g fill="#f6c6b6"><rect x="1722.2" y="601.02" width="0.9" height="5.8"/><rect x="1724.4" y="601.02" width="0.9" height="5.8"/><rect x="1726.6" y="601.02" width="0.9" height="5.8"/></g><path d="M1722.4,654.49 v-1.3 q0,-1 1,-1 h3.3 q1,0 1,1 v1.3" fill="none" stroke="#fff" stroke-width="1.2"/><rect x="1718.9" y="654.19" width="12" height="1.3" fill="#fff"/><path d="M1720.1,655.39 h9.9 v8.2 q0,0.9 -0.9,0.9 h-8.1 q-0.9,0 -0.9,-0.9 z" fill="#fff"/><g fill="#f6c6b6"><rect x="1722.2" y="656.49" width="0.9" height="5.8"/><rect x="1724.4" y="656.49" width="0.9" height="5.8"/><rect x="1726.6" y="656.49" width="0.9" height="5.8"/></g><path d="M1722.4,709.96 v-1.3 q0,-1 1,-1 h3.3 q1,0 1,1 v1.3" fill="none" stroke="#fff" stroke-width="1.2"/><rect x="1718.9" y="709.66" width="12" height="1.3" fill="#fff"/><path d="M1720.1,710.86 h9.9 v8.2 q0,0.9 -0.9,0.9 h-8.1 q-0.9,0 -0.9,-0.9 z" fill="#fff"/><g fill="#f6c6b6"><rect x="1722.2" y="711.96" width="0.9" height="5.8"/><rect x="1724.4" y="711.96" width="0.9" height="5.8"/><rect x="1726.6" y="711.96" width="0.9" height="5.8"/></g><path d="M1722.4,765.43 v-1.3 q0,-1 1,-1 h3.3 q1,0 1,1 v1.3" fill="none" stroke="#fff" stroke-width="1.2"/><rect x="1718.9" y="765.13" width="12" height="1.3" fill="#fff"/><path d="M1720.1,766.33 h9.9 v8.2 q0,0.9 -0.9,0.9 h-8.1 q-0.9,0 -0.9,-0.9 z" fill="#fff"/><g fill="#f6c6b6"><rect x="1722.2" y="767.43" width="0.9" height="5.8"/><rect x="1724.4" y="767.43" width="0.9" height="5.8"/><rect x="1726.6" y="767.43" width="0.9" height="5.8"/></g><path d="M1722.4,820.90 v-1.3 q0,-1 1,-1 h3.3 q1,0 1,1 v1.3" fill="none" stroke="#fff" stroke-width="1.2"/><rect x="1718.9" y="820.60" width="12" height="1.3" fill="#fff"/><path d="M1720.1,821.80 h9.9 v8.2 q0,0.9 -0.9,0.9 h-8.1 q-0.9,0 -0.9,-0.9 z" fill="#fff"/><g fill="#f6c6b6"><rect x="1722.2" y="822.90" width="0.9" height="5.8"/><rect x="1724.4" y="822.90" width="0.9" height="5.8"/><rect x="1726.6" y="822.90" width="0.9" height="5.8"/></g><path d="M1722.4,876.37 v-1.3 q0,-1 1,-1 h3.3 q1,0 1,1 v1.3" fill="none" stroke="#fff" stroke-width="1.2"/><rect x="1718.9" y="876.07" width="12" height="1.3" fill="#fff"/><path d="M1720.1,877.27 h9.9 v8.2 q0,0.9 -0.9,0.9 h-8.1 q-0.9,0 -0.9,-0.9 z" fill="#fff"/><g fill="#f6c6b6"><rect x="1722.2" y="878.37" width="0.9" height="5.8"/><rect x="1724.4" y="878.37" width="0.9" height="5.8"/><rect x="1726.6" y="878.37" width="0.9" height="5.8"/></g><path d="M1722.4,931.84 v-1.3 q0,-1 1,-1 h3.3 q1,0 1,1 v1.3" fill="none" stroke="#fff" stroke-width="1.2"/><rect x="1718.9" y="931.54" width="12" height="1.3" fill="#fff"/><path d="M1720.1,932.74 h9.9 v8.2 q0,0.9 -0.9,0.9 h-8.1 q-0.9,0 -0.9,-0.9 z" fill="#fff"/><g fill="#f6c6b6"><rect x="1722.2" y="933.84" width="0.9" height="5.8"/><rect x="1724.4" y="933.84" width="0.9" height="5.8"/><rect x="1726.6" y="933.84" width="0.9" height="5.8"/></g><path d="M1722.4,987.31 v-1.3 q0,-1 1,-1 h3.3 q1,0 1,1 v1.3" fill="none" stroke="#fff" stroke-width="1.2"/><rect x="1718.9" y="987.01" width="12" height="1.3" fill="#fff"/><path d="M1720.1,988.21 h9.9 v8.2 q0,0.9 -0.9,0.9 h-8.1 q-0.9,0 -0.9,-0.9 z" fill="#fff"/><g fill="#f6c6b6"><rect x="1722.2" y="989.31" width="0.9" height="5.8"/><rect x="1724.4" y="989.31" width="0.9" height="5.8"/><rect x="1726.6" y="989.31" width="0.9" height="5.8"/></g><path d="M1722.4,1042.78 v-1.3 q0,-1 1,-1 h3.3 q1,0 1,1 v1.3" fill="none" stroke="#fff" stroke-width="1.2"/><rect x="1718.9" y="1042.48" width="12" height="1.3" fill="#fff"/><path d="M1720.1,1043.68 h9.9 v8.2 q0,0.9 -0.9,0.9 h-8.1 q-0.9,0 -0.9,-0.9 z" fill="#fff"/><g fill="#f6c6b6"><rect x="1722.2" y="1044.78" width="0.9" height="5.8"/><rect x="1724.4" y="1044.78" width="0.9" height="5.8"/><rect x="1726.6" y="1044.78" width="0.9" height="5.8"/></g></svg>
</body></html>
